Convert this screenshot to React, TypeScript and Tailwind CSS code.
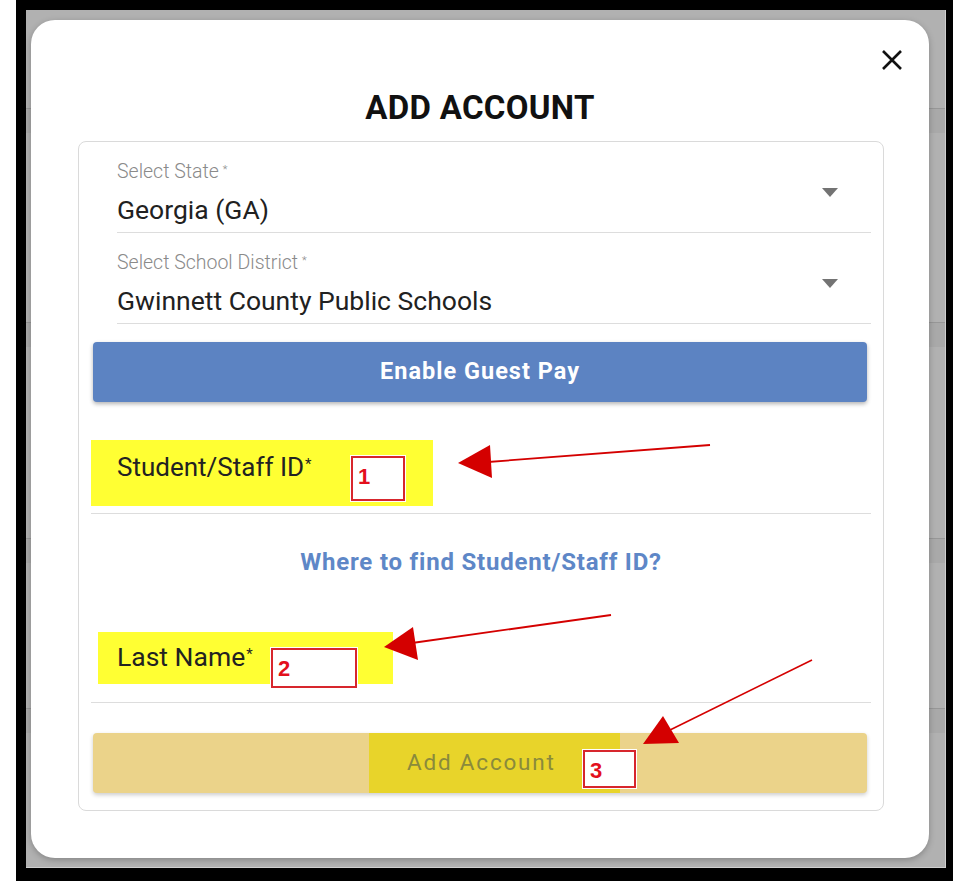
import React from "react";

function Caret() {
  return (
    <svg width="16" height="9" viewBox="0 0 16 9" className="block">
      <polygon points="0,0 16,0 8,9" fill="#737373" />
    </svg>
  );
}

function SelectField({ label, value }: { label: string; value: string }) {
  return (
    <div className="ml-[26px] flex items-center border-b border-[#dddddd] pt-[20px] pb-[6px]">
      <div className="flex-1">
        <div className="text-[19.5px] font-light leading-[20px] text-[#8a8a8a]">
          {label}
          <sup className="ml-[4px] text-[11px]">*</sup>
        </div>
        <div className="mt-[12px] text-[26.5px] leading-[32px] text-[#212121]">{value}</div>
      </div>
      <div className="mr-[33px] mt-[-4px]">
        <Caret />
      </div>
    </div>
  );
}

function NumBox({ n, cls }: { n: string; cls: string }) {
  return (
    <div
      className={
        "absolute border-2 border-[#d7262d] bg-white pl-[5px] pt-[8px] font-['Liberation_Sans',Arial,sans-serif] text-[22px] font-bold leading-none text-[#e3101c] outline outline-1 outline-white " +
        cls
      }
    >
      {n}
    </div>
  );
}

export default function App() {
  return (
    <div className="relative h-[881px] w-[975px] overflow-hidden bg-white font-['Roboto','Noto_Sans',sans-serif]">
      <div className="ml-[16px] h-[881px] w-[937px] border-t-[10px] border-l-[10px] border-r-[7px] border-b-[13px] border-black">
        <div className="relative h-full w-full overflow-hidden border-r border-b border-[#cfcfcf] bg-[#b1b1b1]">
          {/* page behind the dialog */}
          <div className="flex flex-col">
            <div className="h-[98px]" />
            <div className="h-[25px] border-t border-[#979797] bg-[#a9a9a9]" />
            <div className="h-[189px]" />
            <div className="h-[25px] border-t border-[#979797] bg-[#a9a9a9]" />
            <div className="h-[191px]" />
            <div className="h-[25px] border-t border-[#979797] bg-[#a9a9a9]" />
            <div className="h-[145px]" />
            <div className="h-[25px] border-t border-[#979797] bg-[#a9a9a9]" />
          </div>

          {/* dialog */}
          <div className="absolute left-[5px] top-[10px] flex h-[838px] w-[898px] flex-col rounded-[24px] bg-white shadow-[0_2px_6px_rgba(0,0,0,0.25)]">
            <div className="flex justify-end pt-[28px] pr-[25px]">
              <svg width="24" height="24" viewBox="0 0 24 24">
                <path d="M3 3 L21 21 M21 3 L3 21" stroke="#111" strokeWidth="2.6" strokeLinecap="butt" />
              </svg>
            </div>
            <div className="mt-[16px] text-center text-[33px] font-bold leading-[40px] tracking-[0.3px] text-[#111]">
              ADD ACCOUNT
            </div>

            <div className="ml-[47px] mr-[45px] mt-[13px] rounded-[8px] border border-[#dadada] px-[12px] pb-[17px]">
              <SelectField label="Select State" value="Georgia (GA)" />
              <SelectField label="Select School District" value="Gwinnett County Public Schools" />

              <div className="ml-[2px] mr-[4px] mt-[18px] flex h-[60px] items-center justify-center rounded-[4px] bg-[#5c83c2] text-[23.5px] font-bold tracking-[1px] text-white shadow-[0_2px_4px_rgba(0,0,0,0.3)]">
                Enable Guest Pay
              </div>

              <div className="mt-[38px] flex h-[66px] w-[342px] items-center bg-[#ffff33] pb-[12px] pl-[26px] text-[26px] leading-[30px] text-[#222]">
                <span>
                  Student/Staff ID<sup className="ml-[1px] text-[15px]">*</sup>
                </span>
              </div>
              <div className="mt-[7px] h-px bg-[#dddddd]" />

              <div className="mt-[33px] text-center text-[24px] font-bold leading-[30px] tracking-[0.8px] text-[#5e87c7]">
                Where to find Student/Staff ID?
              </div>

              <div className="ml-[7px] mt-[55px] flex h-[52px] w-[295px] items-center bg-[#ffff33] pb-[2px] pl-[19px] text-[26.5px] leading-[30px] text-[#222]">
                <span>
                  Last Name<sup className="ml-[1px] text-[15px]">*</sup>
                </span>
              </div>
              <div className="mt-[18px] h-px bg-[#dddddd]" />

              <div className="ml-[2px] mr-[4px] mt-[30px] flex h-[60px] rounded-[4px] bg-[#ebd38a] shadow-[0_2px_4px_rgba(0,0,0,0.2)]">
                <div className="ml-[276px] flex w-[251px] items-center bg-[#e8d42a] pl-[38px] text-[22.5px] tracking-[1.8px] text-[#8a8a3c]">
                  Add Account
                </div>
              </div>
            </div>
          </div>
        </div>
      </div>

      {/* annotations */}
      <svg className="pointer-events-none absolute left-0 top-0" width="975" height="881" viewBox="0 0 975 881">
        <line x1="710" y1="445" x2="488" y2="462" stroke="#d40000" strokeWidth="1.8" />
        <polygon points="458,463 490,445 492,478" fill="#d40000" />
        <line x1="611" y1="615" x2="412" y2="643" stroke="#d40000" strokeWidth="1.8" />
        <polygon points="384,647 413,627 418,660" fill="#d40000" />
        <line x1="812" y1="660" x2="668" y2="731" stroke="#d40000" strokeWidth="1.6" />
        <polygon points="663,716 643,744 679,743" fill="#d40000" />
      </svg>
      <NumBox n="1" cls="left-[351px] top-[456px] h-[45px] w-[54px]" />
      <NumBox n="2" cls="left-[271px] top-[648px] h-[40px] w-[86px]" />
      <NumBox n="3" cls="left-[583px] top-[750px] h-[38px] w-[53px]" />
    </div>
  );
}
